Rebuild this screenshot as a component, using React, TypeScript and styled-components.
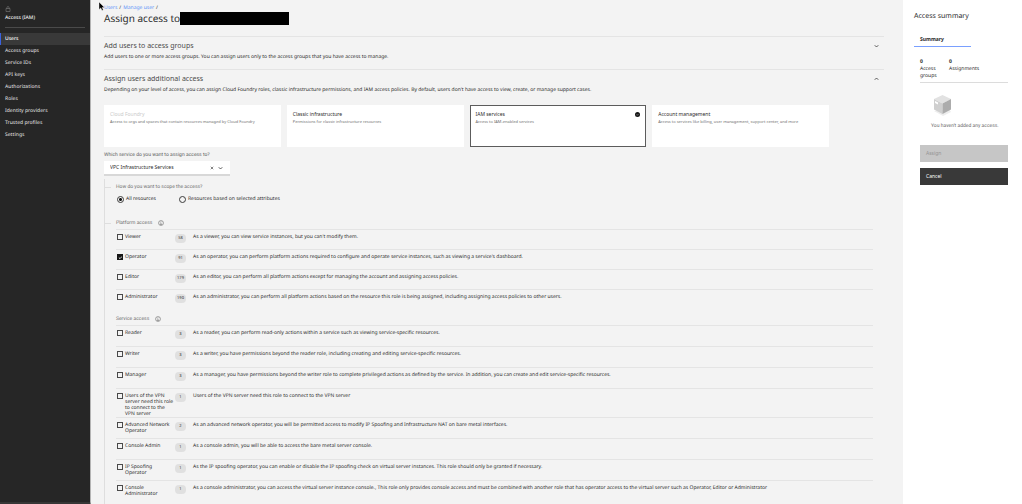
import React, { useState } from "react";
import styled, { createGlobalStyle } from "styled-components";

const GlobalStyle = createGlobalStyle`
  *, *::before, *::after { box-sizing: border-box; }
  body {
    margin: 0;
    background: #f3f3f3;
    color: #2b2b2b;
    font-family: "Noto Sans", "Open Sans", sans-serif;
    font-size: 5px;
    line-height: 7px;
    text-rendering: geometricPrecision;
  }
  h1, h2, h3, p, ul, dl, dd, fieldset { margin: 0; padding: 0; border: 0; font-weight: 400; }
  ul { list-style: none; }
  button, select, input { font: inherit; color: inherit; margin: 0; }
`;

const labelFont = `Roboto, "Noto Sans", sans-serif`;

const Page = styled.div`
  display: grid;
  grid-template-columns: 91px minmax(0, 1fr) 119px;
  min-height: 100vh;
`;

const Sidebar = styled.nav`
  display: flex;
  flex-direction: column;
  padding-top: 6px;
  background: #262626;
  color: #d6d6d6;
  border-right: 1px solid #b4b4b4;
  border-bottom: 4px solid #363636;
`;

const SidebarIcon = styled.svg`
  width: 6px;
  height: 6px;
  margin-left: 5px;
`;

const SidebarTitle = styled.div`
  margin: 3px 5px 0;
  padding-bottom: 5px;
  border-bottom: 1px solid #4a4a4a;
  color: #f4f4f4;
  font-weight: 500;
`;

const NavList = styled.ul`
  margin-top: 5px;
`;

const NavLink = styled.a<{ $active?: boolean }>`
  display: block;
  padding: 3px 4px 2px;
  border-left: 1px solid ${(p) => (p.$active ? "#3a62e0" : "transparent")};
  background: ${(p) => (p.$active ? "#393939" : "transparent")};
  color: ${(p) => (p.$active ? "#ffffff" : "#d6d6d6")};
  font-weight: 500;
  text-decoration: none;
`;

const Main = styled.main`
  display: flex;
  flex-direction: column;
  padding: 4px 19px 0 13px;
`;

const Breadcrumb = styled.nav`
  display: flex;
  gap: 2px;
  line-height: 8px;
  position: relative;
`;

const Pointer = styled.svg`
  position: absolute;
  left: -6px;
  top: -3px;
  width: 7px;
  height: 10px;
`;

const CrumbLink = styled.a`
  color: #5f93f8;
  text-decoration: none;
`;

const TitleRow = styled.div`
  display: flex;
  align-items: center;
  margin-bottom: 11px;
`;

const Title = styled.h1`
  font-size: 10px;
  line-height: 13px;
  white-space: nowrap;
`;

const Redacted = styled.span`
  width: 109px;
  height: 13px;
  background: #000;
`;

const Panel = styled.section`
  padding: 4px 0 8px;
  border-top: 1px solid #e4e4e4;
`;

const PanelHeader = styled.button`
  display: flex;
  align-items: center;
  justify-content: space-between;
  width: 100%;
  padding: 0 5px 0 0;
  border: 0;
  background: none;
  color: #4c4c4c;
  font-size: 7px;
  line-height: 10px;
  text-align: left;
`;

const PanelText = styled.p`
  margin-top: 3px;
`;

const ChevronIcon = styled.svg<{ $up?: boolean }>`
  width: 5px;
  height: 4px;
  flex: none;
  transform: ${(p) => (p.$up ? "rotate(180deg)" : "none")};
`;

const Cards = styled.div`
  display: grid;
  grid-template-columns: repeat(4, minmax(0, 1fr));
  gap: 6px;
  padding-right: 55px;
  margin-top: 3px;
`;

const Card = styled.button<{ $selected?: boolean; $disabled?: boolean }>`
  display: flex;
  align-items: flex-start;
  justify-content: space-between;
  min-height: 42px;
  padding: 5px;
  border: 1px solid ${(p) => (p.$selected ? "#5c5c5c" : "#ffffff")};
  background: #fff;
  text-align: left;
  color: ${(p) => (p.$disabled ? "#cacaca" : "#2b2b2b")};
`;

const CardText = styled.span`
  display: block;
  font-size: 4px;
  line-height: 8px;
  color: #6f6f6f;
`;

const Badge = styled.svg`
  width: 5px;
  height: 5px;
  flex: none;
  margin-top: 1px;
`;

const FieldLabel = styled.label`
  margin-top: 4px;
  font-family: ${labelFont};
  line-height: 8px;
  color: #606060;
`;

const SelectBox = styled.div`
  display: flex;
  align-items: center;
  width: 126px;
  height: 15px;
  margin-top: 2px;
  padding: 0 7px 0 6px;
  gap: 4px;
  background: #fff;
  border-bottom: 2px solid #d8d8d8;
`;

const Select = styled.select`
  flex: 1;
  min-width: 0;
  padding: 0;
  border: 0;
  appearance: none;
  background: none;
`;

const ClearButton = styled.button`
  display: flex;
  padding: 0;
  border: 0;
  background: none;
`;

const SmallIcon = styled.svg`
  width: 4px;
  height: 4px;
`;

const Tree = styled.div`
  flex: 1;
  margin: 3px 11px 0 0;
  padding: 4px 0 0 11px;
  border-left: 1px solid #dedede;
`;

const Legend = styled.h3<{ $tick?: boolean }>`
  display: flex;
  align-items: center;
  gap: 6px;
  font-family: ${labelFont};
  font-size: 5px;
  line-height: 8px;
  color: #707070;
  &::before {
    content: "";
    width: 6px;
    height: 1px;
    margin: 0 -1px 0 -11px;
    background: ${(p) => (p.$tick ? "#dedede" : "transparent")};
  }
`;

const InfoIcon = styled.svg`
  width: 6px;
  height: 6px;
`;

const Radios = styled.div`
  display: flex;
  gap: 23px;
  margin: 5px 0 16px 1px;
`;

const RadioLabel = styled.label`
  display: flex;
  align-items: center;
  gap: 2px;
`;

const Radio = styled.input`
  appearance: none;
  width: 7px;
  height: 7px;
  border: 1px solid #3c3c3c;
  border-radius: 50%;
  &:checked {
    background: radial-gradient(circle, #161616 0 1px, transparent 2px);
  }
`;

const RoleTable = styled.table<{ $rowHeight: number }>`
  width: 100%;
  margin: 2px 0 5px;
  border-collapse: collapse;
  table-layout: fixed;
  tr { height: ${(p) => p.$rowHeight}px; }
`;

const Cell = styled.td<{ $width?: number }>`
  width: ${(p) => (p.$width ? p.$width + "px" : "auto")};
  padding: 4px 0 0;
  border-top: 1px solid #e4e4e4;
  vertical-align: top;
`;

const RoleLabel = styled.label`
  display: flex;
  gap: 2px;
  padding: 0 1px;
  line-height: 6px;
`;

const Checkbox = styled.input`
  appearance: none;
  flex: none;
  width: 6px;
  height: 6px;
  border: 1px solid #4a4a4a;
  &:checked {
    border-color: #161616;
    background: #161616 url("data:image/svg+xml,%3Csvg xmlns='http://www.w3.org/2000/svg' viewBox='0 0 6 6'%3E%3Cpath d='M1 3l1.400 1.400L5 1.600' fill='none' stroke='white'/%3E%3C/svg%3E") center / 5px no-repeat;
  }
`;

const Count = styled.span`
  display: block;
  width: 11px;
  border-radius: 4px;
  background: #e0e0e0;
  font-size: 4px;
  line-height: 9px;
  text-align: center;
`;

const Aside = styled.aside`
  padding: 12px 14px 0 11px;
  background: #fff;
`;

const AsideTitle = styled.h2`
  font-size: 7px;
  line-height: 9px;
`;

const Tab = styled.button`
  display: block;
  width: 57px;
  margin-top: 15px;
  padding: 0 6px 3px;
  border: 0;
  border-bottom: 1px solid #7aa0ff;
  background: none;
  text-align: left;
  font-weight: 700;
`;

const AsideBody = styled.div`
  padding-left: 6px;
`;

const Totals = styled.dl`
  display: flex;
  gap: 9px;
  padding: 12px 0 2px;
  border-bottom: 1px solid #dcdcdc;
`;

const Total = styled.div`
  display: flex;
  flex-direction: column-reverse;
  justify-content: flex-end;
  &:first-child { width: 20px; }
  dd { font-weight: 700; }
`;

const Empty = styled.div`
  padding: 11px 0 0 11px;
  color: #6a6a6a;
  font-family: ${labelFont};
  white-space: nowrap;
`;

const Cube = styled.svg`
  display: block;
  width: 23px;
  height: 23px;
  margin-bottom: 6px;
`;

const ActionButton = styled.button<{ $muted?: boolean }>`
  display: block;
  width: 100%;
  height: 17px;
  margin-top: ${(p) => (p.$muted ? 15 : 6)}px;
  padding: 0 6px;
  border: 0;
  background: ${(p) => (p.$muted ? "#c6c6c6" : "#393939")};
  color: ${(p) => (p.$muted ? "#949494" : "#ffffff")};
  text-align: left;
`;

const Chevron = ({ up }: { up?: boolean }) => (
  <ChevronIcon $up={up} viewBox="0 0 10 8" fill="none" stroke="#333" strokeWidth="1.6" aria-hidden="true">
    <path d="M1.500 2.500L5 6l3.500-3.500" />
  </ChevronIcon>
);

const Info = () => (
  <InfoIcon viewBox="0 0 16 16" fill="none" stroke="#555" strokeWidth="1.4" aria-hidden="true">
    <circle cx="8" cy="8" r="6.500" />
    <path d="M8 4v1.500M6.500 7.500H8V12M6 12h4" />
  </InfoIcon>
);

const navItems = ["Users", "Access groups", "Service IDs", "API keys", "Authorizations", "Roles", "Identity providers", "Trusted profiles", "Settings"];

const cards = [
  { title: "Cloud Foundry", text: "Access to orgs and spaces that contain resources managed by Cloud Foundry", disabled: true },
  { title: "Classic infrastructure", text: "Permissions for classic infrastructure resources" },
  { title: "IAM services", text: "Access to IAM-enabled services", selected: true },
  { title: "Account management", text: "Access to services like billing, user management, support center, and more" },
];

type Role = { name: string; count: number; text: string };

const platformRoles: Role[] = [
  { name: "Viewer", count: 58, text: "As a viewer, you can view service instances, but you can't modify them." },
  { name: "Operator", count: 91, text: "As an operator, you can perform platform actions required to configure and operate service instances, such as viewing a service's dashboard." },
  { name: "Editor", count: 179, text: "As an editor, you can perform all platform actions except for managing the account and assigning access policies." },
  { name: "Administrator", count: 190, text: "As an administrator, you can perform all platform actions based on the resource this role is being assigned, including assigning access policies to other users." },
];

const serviceRoles: Role[] = [
  { name: "Reader", count: 3, text: "As a reader, you can perform read-only actions within a service such as viewing service-specific resources." },
  { name: "Writer", count: 3, text: "As a writer, you have permissions beyond the reader role, including creating and editing service-specific resources." },
  { name: "Manager", count: 3, text: "As a manager, you have permissions beyond the writer role to complete privileged actions as defined by the service. In addition, you can create and edit service-specific resources." },
  { name: "Users of the VPN server need this role to connect to the VPN server", count: 1, text: "Users of the VPN server need this role to connect to the VPN server" },
  { name: "Advanced Network Operator", count: 2, text: "As an advanced network operator, you will be permitted access to modify IP Spoofing and Infrastructure NAT on bare metal interfaces." },
  { name: "Console Admin", count: 1, text: "As a console admin, you will be able to access the bare metal server console." },
  { name: "IP Spoofing Operator", count: 1, text: "As the IP spoofing operator, you can enable or disable the IP spoofing check on virtual server instances. This role should only be granted if necessary." },
  { name: "Console Administrator", count: 1, text: "As a console administrator, you can access the virtual server instance console., This role only provides console access and must be combined with another role that has operator access to the virtual server such as Operator, Editor or Administrator" },
];

function Roles({ roles, rowHeight }: { roles: Role[]; rowHeight: number }) {
  return (
    <RoleTable $rowHeight={rowHeight}>
      <tbody>
        {roles.map((role) => (
          <tr key={role.name}>
            <Cell $width={59}>
              <RoleLabel>
                <Checkbox type="checkbox" defaultChecked={role.name === "Operator"} />
                {role.name}
              </RoleLabel>
            </Cell>
            <Cell $width={18}><Count>{role.count}</Count></Cell>
            <Cell>{role.text}</Cell>
          </tr>
        ))}
      </tbody>
    </RoleTable>
  );
}

export default function App() {
  const [scope, setScope] = useState("all");
  return (
    <>
      <GlobalStyle />
      <Page>
        <Sidebar>
          <SidebarIcon viewBox="0 0 12 12" fill="none" stroke="#8a8a8a" aria-hidden="true">
            <path d="M2 5h8v6H2zM4 5V3a2 2 0 0 1 4 0v2" />
          </SidebarIcon>
          <SidebarTitle>Access (IAM)</SidebarTitle>
          <NavList>
            {navItems.map((item, i) => (
              <li key={item}><NavLink href="#" $active={i === 0}>{item}</NavLink></li>
            ))}
          </NavList>
        </Sidebar>
        <Main>
          <Breadcrumb>
            <CrumbLink href="#">Users</CrumbLink><span>/</span>
            <CrumbLink href="#">Manage user</CrumbLink><span>/</span>
            <Pointer viewBox="0 0 7 10" aria-hidden="true">
              <path d="M1 1v7.500l1.800-1.600L4 9.500l1.300-.6L4.200 6.400h2.300z" fill="#000" stroke="#fff" strokeWidth=".4" />
            </Pointer>
          </Breadcrumb>
          <TitleRow>
            <Title>Assign access to</Title>
            <Redacted />
          </TitleRow>
          <Panel>
            <PanelHeader>Add users to access groups<Chevron /></PanelHeader>
            <PanelText>Add users to one or more access groups. You can assign users only to the access groups that you have access to manage.</PanelText>
          </Panel>
          <Panel>
            <PanelHeader>Assign users additional access<Chevron up /></PanelHeader>
            <PanelText>Depending on your level of access, you can assign Cloud Foundry roles, classic infrastructure permissions, and IAM access policies. By default, users don't have access to view, create, or manage support cases.</PanelText>
          </Panel>
          <Cards>
            {cards.map((card) => (
              <Card key={card.title} $selected={card.selected} $disabled={card.disabled}>
                <span>{card.title}<CardText>{card.text}</CardText></span>
                {card.selected && (
                  <Badge viewBox="0 0 10 10" aria-hidden="true">
                    <circle cx="5" cy="5" r="5" fill="#161616" />
                    <path d="M3 5l1.500 1.500L7 4" fill="none" stroke="#fff" strokeWidth=".8" />
                  </Badge>
                )}
              </Card>
            ))}
          </Cards>
          <FieldLabel htmlFor="service">Which service do you want to assign access to?</FieldLabel>
          <SelectBox>
            <Select id="service"><option>VPC Infrastructure Services</option></Select>
            <ClearButton aria-label="Clear selection">
              <SmallIcon viewBox="0 0 8 8" stroke="#333" strokeWidth="1.200"><path d="M1.500 1.500l5 5M6.500 1.500l-5 5" /></SmallIcon>
            </ClearButton>
            <Chevron />
          </SelectBox>
          <Tree>
            <Legend $tick>How do you want to scope the access?</Legend>
            <Radios>
              <RadioLabel>
                <Radio type="radio" name="scope" checked={scope === "all"} onChange={() => setScope("all")} />All resources
              </RadioLabel>
              <RadioLabel>
                <Radio type="radio" name="scope" checked={scope === "some"} onChange={() => setScope("some")} />Resources based on selected attributes
              </RadioLabel>
            </Radios>
            <Legend $tick>Platform access<Info /></Legend>
            <Roles roles={platformRoles} rowHeight={20} />
            <Legend>Service access<Info /></Legend>
            <Roles roles={serviceRoles} rowHeight={21} />
          </Tree>
        </Main>
        <Aside>
          <AsideTitle>Access summary</AsideTitle>
          <Tab>Summary</Tab>
          <AsideBody>
            <Totals>
              <Total><dt>Access groups</dt><dd>0</dd></Total>
              <Total><dt>Assignments</dt><dd>0</dd></Total>
            </Totals>
            <Empty>
              <Cube viewBox="0 0 23 23" aria-hidden="true">
                <path d="M3 17l9 5 8-4-2-3z" fill="#ededed" />
                <path d="M11.500 1L20 5l-8.500 4.500L3 5z" fill="#e2e2e2" />
                <path d="M3 5l8.500 4.500V20L3 15.500z" fill="#cfcfcf" />
                <path d="M20 5l-8.500 4.500V20L20 15.500z" fill="#acacac" />
                <path d="M4 7l3 1.500v2L4 9z" fill="#fff" />
              </Cube>
              You haven't added any access.
            </Empty>
            <ActionButton $muted disabled>Assign</ActionButton>
            <ActionButton>Cancel</ActionButton>
          </AsideBody>
        </Aside>
      </Page>
    </>
  );
}
